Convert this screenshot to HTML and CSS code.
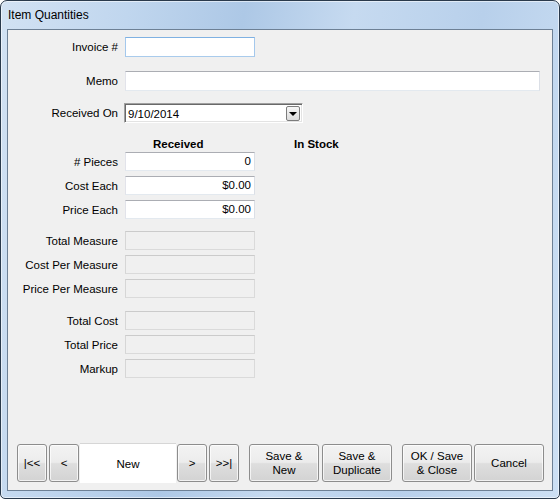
FILE: index.html
```html
<!DOCTYPE html>
<html>
<head>
<meta charset="utf-8">
<title>Item Quantities</title>
<link rel="stylesheet" href="styles.css">
</head>
<body>
<div class="window">
  <div class="titlebar">Item Quantities</div>
  <div class="client">
    <div class="row tall m7"><div class="label">Invoice #</div><div class="field focus"></div></div>
    <div class="row tall m14"><div class="label">Memo</div><div class="field memo"></div></div>
    <div class="row tall m12"><div class="label">Received On</div>
      <div class="date"><span class="date-text">9/10/2014</span><span class="drop"><span class="arrow"></span></span></div>
    </div>
    <div class="row head m13"><div class="label"></div><div class="col-received">Received</div><div class="col-stock">In Stock</div></div>
    <div class="row"><div class="label"># Pieces</div><div class="field">0</div></div>
    <div class="row m5"><div class="label">Cost Each</div><div class="field">$0.00</div></div>
    <div class="row m5"><div class="label">Price Each</div><div class="field">$0.00</div></div>
    <div class="row m12"><div class="label">Total Measure</div><div class="field disabled"></div></div>
    <div class="row m5"><div class="label">Cost Per Measure</div><div class="field disabled"></div></div>
    <div class="row m5"><div class="label">Price Per Measure</div><div class="field disabled"></div></div>
    <div class="row m13"><div class="label">Total Cost</div><div class="field disabled"></div></div>
    <div class="row m5"><div class="label">Total Price</div><div class="field disabled"></div></div>
    <div class="row m5"><div class="label">Markup</div><div class="field disabled"></div></div>
    <div class="buttons">
      <div class="btn nav">|&lt;&lt;</div>
      <div class="btn nav g2">&lt;</div>
      <div class="record g1">New</div>
      <div class="btn nav g1">&gt;</div>
      <div class="btn nav g2">&gt;&gt;|</div>
      <div class="btn wide g10">Save &amp;<br>New</div>
      <div class="btn wide g3">Save &amp;<br>Duplicate</div>
      <div class="btn wide g10">OK / Save<br>&amp; Close</div>
      <div class="btn wide g2">Cancel</div>
    </div>
  </div>
</div>
</body>
</html>
```

FILE: styles.css
```css
* { box-sizing: border-box; }
html, body { margin: 0; padding: 0; }
body {
  width: 560px;
  height: 499px;
  overflow: hidden;
  background: #ffffff;
  font-family: "Liberation Sans", Arial, sans-serif;
  font-size: 11.5px;
  color: #000;
}
.window {
  width: 560px;
  height: 499px;
  border: 1px solid #2a3a4c;
  border-radius: 7px 7px 5px 5px;
  background: linear-gradient(100deg, #d2e2f3 0%, #c0d6ee 20%, #adc8e6 38%, #c6daf0 55%, #b8d0eb 75%, #cde0f4 100%);
  box-shadow: inset 0 0 0 1px rgba(255,255,255,0.55);
  padding: 0 6px 7px 6px;
  display: flex;
  flex-direction: column;
}
.titlebar {
  flex: none;
  height: 28px;
  line-height: 29px;
  font-size: 12px;
  padding-left: 1px;
  color: #000;
}
.client {
  flex: 1;
  border: 1px solid #6d8095;
  background: #f0f0f0;
  display: flex;
  flex-direction: column;
  padding: 0 0 7px 0;
}
.row {
  flex: none;
  display: flex;
  align-items: center;
  height: 19px;
}
.row.tall { height: 20px; }
.row.head { height: 16px; font-weight: bold; }
.m5 { margin-top: 5px; }
.m7 { margin-top: 7px; }
.m12 { margin-top: 12px; }
.m13 { margin-top: 13px; }
.m14 { margin-top: 14px; }
.label {
  flex: none;
  width: 110px;
  margin-right: 7px;
  text-align: right;
  white-space: nowrap;
}
.field {
  flex: none;
  width: 130px;
  height: 100%;
  background: #fff;
  border: 1px solid;
  border-color: #abadb3 #dbdfe6 #e3e9ef #e2e3ea;
  padding: 0 3px;
  text-align: right;
  line-height: 17px;
}
.field.focus { border-color: #7fb1e2 #a4c8ec #a9cbec #a4c8ec; }
.field.memo { width: 415px; }
.field.disabled {
  background: #f0f0f0;
  border-color: #cbcbcb #dadada #dadada #d6d6d6;
}
.date {
  flex: none;
  width: 179px;
  height: 100%;
  margin-left: -1px;
  background: #fff;
  border-top: 1px solid #a0a0a0;
  border-left: 1px solid #a0a0a0;
  border-right: 1px solid #ffffff;
  border-bottom: 1px solid #ffffff;
  box-shadow: inset 1px 1px 0 #696969, inset -1px -1px 0 #e3e3e3;
  display: flex;
  align-items: center;
  justify-content: space-between;
  padding: 0 2px 0 3px;
}
.date-text { padding-top: 1px; }
.drop {
  width: 14px;
  height: 15px;
  border: 1px solid #7c7c7c;
  border-radius: 2px;
  background: linear-gradient(#f6f6f6, #dcdcdc);
  display: flex;
  align-items: center;
  justify-content: center;
}
.arrow {
  width: 0;
  height: 0;
  border-left: 4px solid transparent;
  border-right: 4px solid transparent;
  border-top: 4px solid #000;
  margin-top: 1px;
}
.col-received { width: 169px; padding-left: 28px; }
.col-stock { flex: none; }
.buttons {
  margin-top: auto;
  flex: none;
  display: flex;
  align-items: center;
  height: 40px;
  padding-left: 9px;
}
.btn {
  flex: none;
  height: 38px;
  border: 1px solid #8d8d8d;
  border-radius: 3px;
  background: linear-gradient(#f3f3f3 0%, #ececec 48%, #dedede 52%, #d3d3d3 100%);
  box-shadow: inset 0 0 0 1px rgba(255,255,255,0.7);
  display: flex;
  align-items: center;
  justify-content: center;
  text-align: center;
  line-height: 14px;
  font-size: 11.5px;
}
.btn.nav { width: 30px; }
.btn.wide { width: 70px; }
.record {
  flex: none;
  width: 96px;
  height: 40px;
  background: #fff;
  border-top: 1px solid #d6d6d6;
  display: flex;
  align-items: center;
  justify-content: center;
}
.g1 { margin-left: 1px; }
.g2 { margin-left: 2px; }
.g3 { margin-left: 3px; }
.g10 { margin-left: 10px; }
```
